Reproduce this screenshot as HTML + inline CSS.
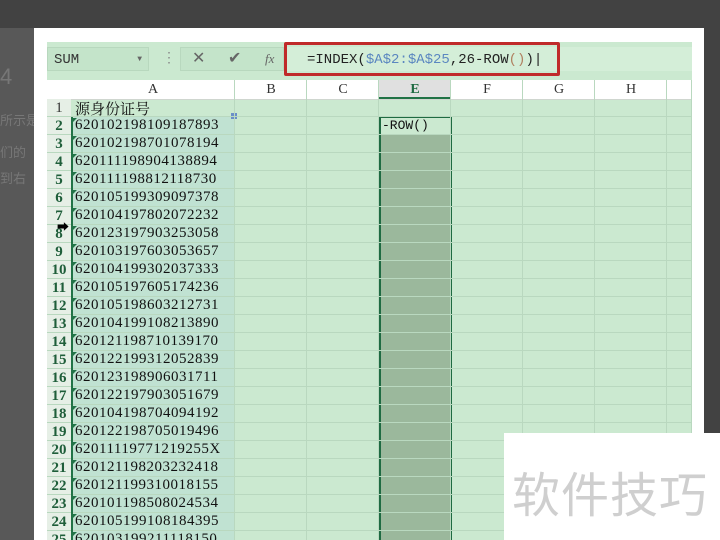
<!DOCTYPE html><html><head><meta charset="utf-8"><style>
html,body{margin:0;width:720px;height:540px;overflow:hidden}
body{background:#424242;position:relative;font-family:"Liberation Mono","Noto Sans CJK SC",monospace}
.a{position:absolute}
.n{font-family:"Liberation Serif","Noto Serif CJK SC",serif}
</style></head><body>
<div class="a" style="left:0;top:28px;width:34px;height:512px;background:#585858"></div>
<div class="a" style="left:0;top:110px;color:#777;font:13px 'Noto Sans CJK SC',sans-serif">所示是</div>
<div class="a" style="left:0;top:142px;color:#777;font:13px 'Noto Sans CJK SC',sans-serif">们的</div>
<div class="a" style="left:0;top:168px;color:#777;font:13px 'Noto Sans CJK SC',sans-serif">到右</div>
<div class="a" style="left:0;top:64px;color:#777;font:22px 'Liberation Sans',sans-serif">4</div>
<div class="a" style="left:34px;top:28px;width:670px;height:512px;background:#fff"></div>
<div class="a" style="left:47px;top:42px;width:645px;height:498px;background:#cbe9d0"></div>
<div class="a" style="left:47px;top:47px;width:102px;height:24px;background:#c4e4ca;border:1px solid #b8d8be;box-sizing:border-box;font-size:14px;line-height:24px;padding-left:6px;color:#333">SUM<span style="position:absolute;right:6px;font-size:8px;color:#666">▼</span></div>
<div class="a" style="left:162px;top:50px;color:#888;font-size:14px">⋮</div>
<div class="a" style="left:180px;top:47px;width:104px;height:24px;background:#c4e4ca;border:1px solid #b8d8be;box-sizing:border-box;color:#666;font-size:16px;line-height:22px"><span style="position:absolute;left:11px">✕</span><span style="position:absolute;left:47px">✔</span><span class="n" style="position:absolute;left:84px;font-style:italic;font-size:13px">fx</span></div>
<div class="a" style="left:287px;top:47px;width:405px;height:24px;background:#d4eed8"></div>
<div class="a" style="left:284px;top:42px;width:276px;height:34px;border:3px solid #c02a2a;box-sizing:border-box;border-radius:2px"></div>
<div class="a" style="left:307px;top:52px;font-size:14px;color:#222;white-space:pre">=INDEX(<span style="color:#5b87c0">$A$2:$A$25</span>,26-ROW<span style="color:#b08060">()</span>)|</div>
<div class="a" style="left:47px;top:80px;width:645px;height:19px;background:#fff;border-bottom:1px solid #cfd6cf"></div>
<div class="a" style="left:379px;top:80px;width:72px;height:19px;background:#e0e0e0;border-bottom:2px solid #217346;box-sizing:border-box"></div>
<div class="a" style="left:47px;top:99px;width:24px;height:441px;background:#e6efe6"></div>
<div class="a" style="left:71px;top:117px;width:164px;height:423px;background:#c0e2d2"></div>
<div class="a" style="left:72px;top:116px;width:163px;height:430px;border:1px solid #6a8fc8;box-sizing:border-box"></div>
<div class="a" style="left:231px;top:113px;width:6px;height:6px;background:#6a8fc8"></div>
<div class="a" style="left:380px;top:134px;width:70px;height:406px;background:#9bb89c"></div>
<div class="a" style="left:379px;top:116px;width:73px;height:430px;border:2px solid #1f6b42;box-sizing:border-box"></div>
<div class="a" style="left:382px;top:118px;font-size:13px;color:#111">-ROW()</div>
<div id="g"></div>
<div class="a" style="left:57px;top:218px;font-size:12px;color:#000">➡</div>
<div class="a" style="left:692px;top:42px;width:12px;height:498px;background:#fff"></div>
<div class="a" style="left:504px;top:433px;width:216px;height:107px;background:#fff"></div>
<div class="a" style="left:512px;top:456px;font:48px 'Noto Sans CJK SC',sans-serif;color:#cfcfcf;letter-spacing:1px">软件技巧</div>
<script>
var cols=[[71,235,'A'],[235,307,'B'],[307,379,'C'],[379,451,'E'],[451,523,'F'],[523,595,'G'],[595,667,'H'],[667,692,'']];
var h='';
cols.forEach(c=>{h+='<div class="a n" style="left:'+c[0]+'px;top:82px;width:'+(c[1]-c[0])+'px;text-align:center;font-size:14px;color:#333;'+(c[2]=='E'?'font-weight:bold;color:#1f6b42':'')+'">'+c[2]+'</div>';
h+='<div class="a" style="left:'+(c[1]-1)+'px;top:80px;width:1px;height:460px;background:#b9d8bf"></div>';});
var ids=['源身份证号','620102198109187893','620102198701078194','620111198904138894','620111198812118730','620105199309097378','620104197802072232','620123197903253058','620103197603053657','620104199302037333','620105197605174236','620105198603212731','620104199108213890','620121198710139170','620122199312052839','620123198906031711','620122197903051679','620104198704094192','620122198705019496','62011119771219255X','620121198203232418','620121199310018155','620101198508024534','620105199108184395','620103199211118150'];
for(var i=0;i<25;i++){var y=99+i*18;
h+='<div class="a" style="left:47px;top:'+(y+17)+'px;width:645px;height:1px;background:#b9d8bf"></div>';
h+='<div class="a n" style="left:47px;top:'+(y+1)+'px;width:24px;text-align:center;font-size:15px;'+(i==0?'color:#333':'color:#1f5e3a;font-weight:bold')+'">'+(i+1)+'</div>';
h+='<div class="a n" style="left:75px;top:'+(y+(i==0?-1:0))+'px;font-size:15px;color:#111;'+(i==0?'':'letter-spacing:0.5px')+'">'+ids[i]+'</div>';
if(i>0)h+='<div class="a" style="left:73px;top:'+(y+1)+'px;width:0;height:0;border-top:4px solid #217346;border-right:4px solid transparent"></div>';}
h+='<div class="a" style="left:71px;top:117px;width:2px;height:423px;background:#217346"></div>';
document.getElementById('g').innerHTML=h;
</script>
</body></html>
